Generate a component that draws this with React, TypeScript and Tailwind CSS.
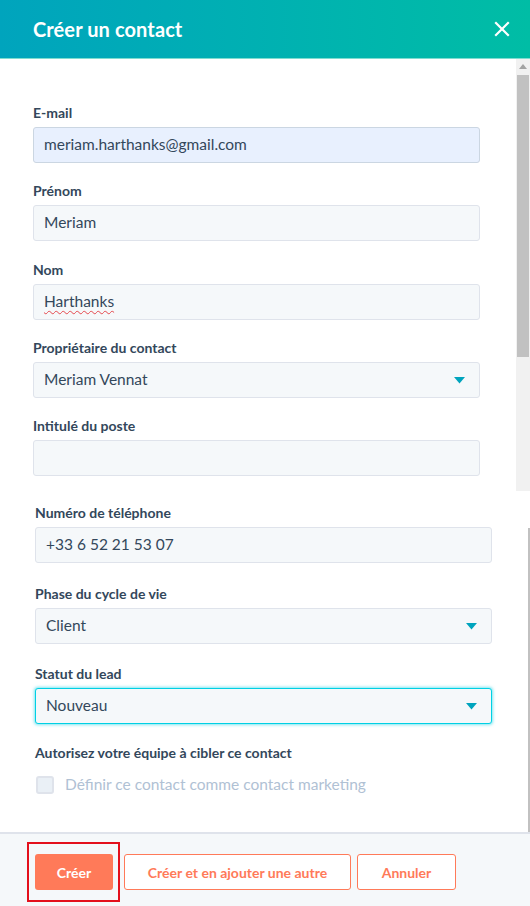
import React from 'react';

const font = "font-['Lato','Liberation_Sans',sans-serif]";

const Caret = () => (
  <svg width="11" height="7" viewBox="0 0 11 7" className="shrink-0">
    <path d="M0 0 H11 L5.5 6.5 Z" fill="#00a4bd" />
  </svg>
);

interface FieldProps {
  label: string;
  value?: string;
  select?: boolean;
  focused?: boolean;
  autofill?: boolean;
  misspelled?: boolean;
  className?: string;
}

const Field: React.FC<FieldProps> = ({ label, value, select, focused, autofill, misspelled, className }) => (
  <div className={className}>
    <div className="h-[18px] mb-[5px] text-[14px] leading-[18px] font-bold text-[#33475b]">{label}</div>
    <div
      className={`h-[36px] flex items-center justify-between px-[10px] rounded-[3px] border text-[15.5px] text-[#33475b] ${
        focused
          ? 'border-[#00d0e4] bg-[#f5f8fa] shadow-[0_0_3px_1px_rgba(0,208,228,0.5)]'
          : autofill
          ? 'border-[#cbd6e2] bg-[#e8f0fe]'
          : 'border-[#dfe3eb] bg-[#f5f8fa]'
      }`}
    >
      <span
        className={
          misspelled
            ? 'underline decoration-wavy decoration-[#e5484d] decoration-1 underline-offset-[3px]'
            : ''
        }
      >
        {value}
      </span>
      {select && <span className="mr-[4px]"><Caret /></span>}
    </div>
  </div>
);

export default function App() {
  return (
    <div className={`w-[530px] h-[906px] flex flex-col bg-white overflow-hidden ${font}`}>
      {/* Header */}
      <div className="h-[59px] shrink-0 flex items-center justify-between pl-[33px] pr-[20px] bg-gradient-to-r from-[#00a4bd] to-[#00bda5] border-b border-[#7fdcd0]">
        <h1 className="text-[20px] font-bold text-white tracking-[0.1px]">Créer un contact</h1>
        <svg width="16" height="16" viewBox="0 0 16 16" className="mb-[1px]">
          <path d="M2 2 L14 14 M14 2 L2 14" stroke="white" strokeWidth="2.2" strokeLinecap="square" />
        </svg>
      </div>

      {/* Upper scrolled part */}
      <div className="h-[432px] shrink-0 flex">
        <div className="flex-1 pl-[33px] pr-[36px] pt-[45px] flex flex-col gap-[19px]">
          <Field label="E-mail" value="meriam.harthanks@gmail.com" autofill />
          <Field label="Prénom" value="Meriam" />
          <Field label="Nom" value="Harthanks" misspelled className="mt-[1px]" />
          <Field label="Propriétaire du contact" value="Meriam Vennat" select />
          <Field label="Intitulé du poste" value="" />
        </div>
        {/* Scrollbar */}
        <div className="w-[14px] bg-[#f1f1f1] flex flex-col items-center">
          <svg width="8" height="5" viewBox="0 0 8 5" className="mt-[5px]">
            <path d="M0 5 L4 0 L8 5 Z" fill="#a3a3a3" />
          </svg>
          <div className="mt-[6px] w-[12px] h-[282px] bg-[#c1c1c1]" />
        </div>
      </div>

      {/* Lower part */}
      <div className="flex-1 flex">
        <div className="flex-1 pl-[35px] pr-[36px] pt-[13px] flex flex-col">
          <Field label="Numéro de téléphone" value="+33 6 52 21 53 07" />
          <Field label="Phase du cycle de vie" value="Client" select className="mt-[22px]" />
          <Field label="Statut du lead" value="Nouveau" select focused className="mt-[21px]" />
          <div className="mt-[20px] h-[18px] text-[14px] leading-[18px] font-bold text-[#33475b]">
            Autorisez votre équipe à cibler ce contact
          </div>
          <div className="mt-[11px] flex items-center gap-[11px] pl-[1px]">
            <div className="w-[18px] h-[18px] rounded-[3px] border-2 border-[#dfe3eb] bg-[#eaf0f6]" />
            <span className="text-[15.5px] text-[#b0c1d4]">Définir ce contact comme contact marketing</span>
          </div>
        </div>
        <div className="w-[2px] mt-[37px] bg-[#c1c1c1]" />
      </div>

      {/* Footer */}
      <div className="h-[74px] shrink-0 border-t-2 border-[#dfe3eb] bg-[#f5f8fa] flex items-center pl-[35px] gap-[11px] pt-[4px]">
        <div className="relative">
          <button className="w-[78px] h-[36px] rounded-[3px] bg-[#ff7a59] text-white text-[14px] font-bold">
            Créer
          </button>
          <div className="absolute left-[-8px] right-[-7px] top-[-12px] bottom-[-12px] border-2 border-[#e3101c] pointer-events-none" />
        </div>
        <button className="w-[227px] h-[36px] rounded-[3px] border border-[#ff7a59] bg-white text-[#ff7a59] text-[14px] font-bold">
          Créer et en ajouter une autre
        </button>
        <button className="ml-[-5px] w-[99px] h-[36px] rounded-[3px] border border-[#ff7a59] bg-white text-[#ff7a59] text-[14px] font-bold">
          Annuler
        </button>
      </div>
    </div>
  );
}
